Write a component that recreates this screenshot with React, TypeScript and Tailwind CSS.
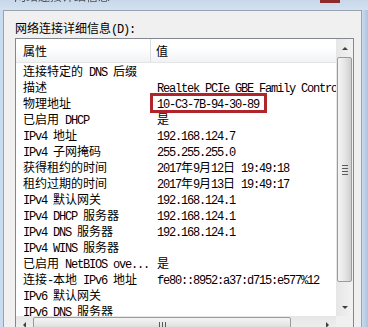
import React from "react";

const CJK = /([\u3000-\u9fff\uff00-\uffef]+)/;

function T({ s }: { s: string }) {
  const parts = s.split(CJK).filter((p) => p !== "");
  return (
    <>
      {parts.map((p, i) =>
        /[\u3000-\u9fff\uff00-\uffef]/.test(p) ? (
          <span key={i}>{p}</span>
        ) : (
          <span
            key={i}
            className="font-['Liberation_Mono','Noto_Sans_CJK_SC',monospace] tracking-[-1.2px] whitespace-pre"
          >
            {p}
          </span>
        )
      )}
    </>
  );
}

const rows: [string, string][] = [
  ["连接特定的 DNS 后缀", ""],
  ["描述", "Realtek PCIe GBE Family Controller"],
  ["物理地址", "10-C3-7B-94-30-89"],
  ["已启用 DHCP", "是"],
  ["IPv4 地址", "192.168.124.7"],
  ["IPv4 子网掩码", "255.255.255.0"],
  ["获得租约的时间", "2017年9月12日 19:49:18"],
  ["租约过期的时间", "2017年9月13日 19:49:17"],
  ["IPv4 默认网关", "192.168.124.1"],
  ["IPv4 DHCP 服务器", "192.168.124.1"],
  ["IPv4 DNS 服务器", "192.168.124.1"],
  ["IPv4 WINS 服务器", ""],
  ["已启用 NetBIOS ove...", "是"],
  ["连接-本地 IPv6 地址", "fe80::8952:a37:d715:e577%12"],
  ["IPv6 默认网关", ""],
  ["IPv6 DNS 服务器", ""],
];

export default function App() {
  return (
    <div className="relative w-[368px] h-[327px] overflow-hidden bg-[#c9dbee] text-[12px] leading-[16px] text-black font-['Noto_Sans_CJK_SC',sans-serif]">
      {/* title bar strip */}
      <div className="h-[10px] flex items-start overflow-hidden bg-gradient-to-b from-[#c8d8ea] to-[#d3e1ef]">
        <div className="ml-[14px] mt-[-11px] text-[12px] leading-[14px] text-[#4a4f57] blur-[0.6px]">
          网络连接详细信息
        </div>
        <div className="ml-auto mr-[28px] w-[20px] h-[3px] bg-[#8e2a2a]" />
      </div>

      <div className="flex h-[317px]">
        <div className="w-[3px] bg-[#c9dbee]" />
        <div className="w-[359px] border-l border-t border-r border-[#97a3b0] bg-[#f0f0f0] pl-[11px] pt-[9px]">
          <div className="h-[16px] whitespace-nowrap">
            <T s="网络连接详细信息(D):" />
          </div>
          <div className="mt-[2px] w-[339px] border border-[#828790] bg-white">
            <div className="flex">
              {/* content */}
              <div className="w-[320px] h-[277px] overflow-hidden">
                <div className="flex h-[24px] bg-gradient-to-b from-white from-40% to-[#f1f2f4] border-b border-[#e5e5e5]">
                  <div className="w-[135px] pl-[7px] flex items-center border-r border-[#dcdcdc]">
                    属性
                  </div>
                  <div className="pl-[5px] flex items-center">值</div>
                </div>
                {rows.map(([k, v], i) => (
                  <div key={i} className="flex h-[16px] whitespace-nowrap">
                    <div className="w-[135px] pl-[7px] shrink-0 overflow-hidden">
                      <T s={k} />
                    </div>
                    <div className="pl-[6px] shrink-0">
                      <T s={v} />
                    </div>
                  </div>
                ))}
              </div>
              {/* vertical scrollbar */}
              <div className="w-[17px] h-[277px] flex flex-col bg-gradient-to-r from-[#e6e6e6] to-[#f2f2f2]">
                <div className="h-[18px] flex items-center justify-center">
                  <div className="w-0 h-0 border-l-[3px] border-r-[3px] border-b-[3px] border-l-transparent border-r-transparent border-b-[#404040]" />
                </div>
                <div className="mx-[1px] h-[225px] rounded-[2px] border border-[#9b9b9b] bg-gradient-to-r from-[#f4f4f4] via-[#e6e6e6] to-[#cfcfcf] flex items-center justify-center">
                  <div className="flex flex-col gap-[2px]">
                    <div className="w-[6px] h-[1px] bg-[#5a5a5a]" />
                    <div className="w-[6px] h-[1px] bg-[#5a5a5a]" />
                    <div className="w-[6px] h-[1px] bg-[#5a5a5a]" />
                    <div className="w-[6px] h-[1px] bg-[#5a5a5a]" />
                  </div>
                </div>
                <div className="flex-1" />
                <div className="h-[18px] flex items-center justify-center">
                  <div className="w-0 h-0 border-l-[3px] border-r-[3px] border-t-[3px] border-l-transparent border-r-transparent border-t-[#404040]" />
                </div>
              </div>
            </div>
            {/* horizontal scrollbar */}
            <div className="flex h-[17px]">
              <div className="w-[320px] flex bg-gradient-to-b from-[#e6e6e6] to-[#f2f2f2]">
                <div className="w-[17px] flex items-center justify-center">
                  <div className="w-0 h-0 border-t-[3px] border-b-[3px] border-r-[3px] border-t-transparent border-b-transparent border-r-[#404040]" />
                </div>
                <div className="w-[258px] my-[1px] rounded-[2px] border border-[#9b9b9b] bg-gradient-to-b from-[#f4f4f4] via-[#e6e6e6] to-[#cfcfcf] flex items-center justify-center">
                  <div className="flex gap-[2px]">
                    <div className="w-[1px] h-[6px] bg-[#5a5a5a]" />
                    <div className="w-[1px] h-[6px] bg-[#5a5a5a]" />
                    <div className="w-[1px] h-[6px] bg-[#5a5a5a]" />
                  </div>
                </div>
                <div className="flex-1" />
                <div className="w-[17px] flex items-center justify-center">
                  <div className="w-0 h-0 border-t-[3px] border-b-[3px] border-l-[3px] border-t-transparent border-b-transparent border-l-[#404040]" />
                </div>
              </div>
              <div className="w-[17px] bg-[#f0f0f0]" />
            </div>
          </div>
        </div>
        <div className="flex-1 bg-gradient-to-r from-[#c9dbee] to-[#aac4e0]" />
      </div>

      {/* red annotation box */}
      <div className="absolute left-[150px] top-[93px] w-[117px] h-[20px] border-[3px] border-[#b0242b]" />
    </div>
  );
}
